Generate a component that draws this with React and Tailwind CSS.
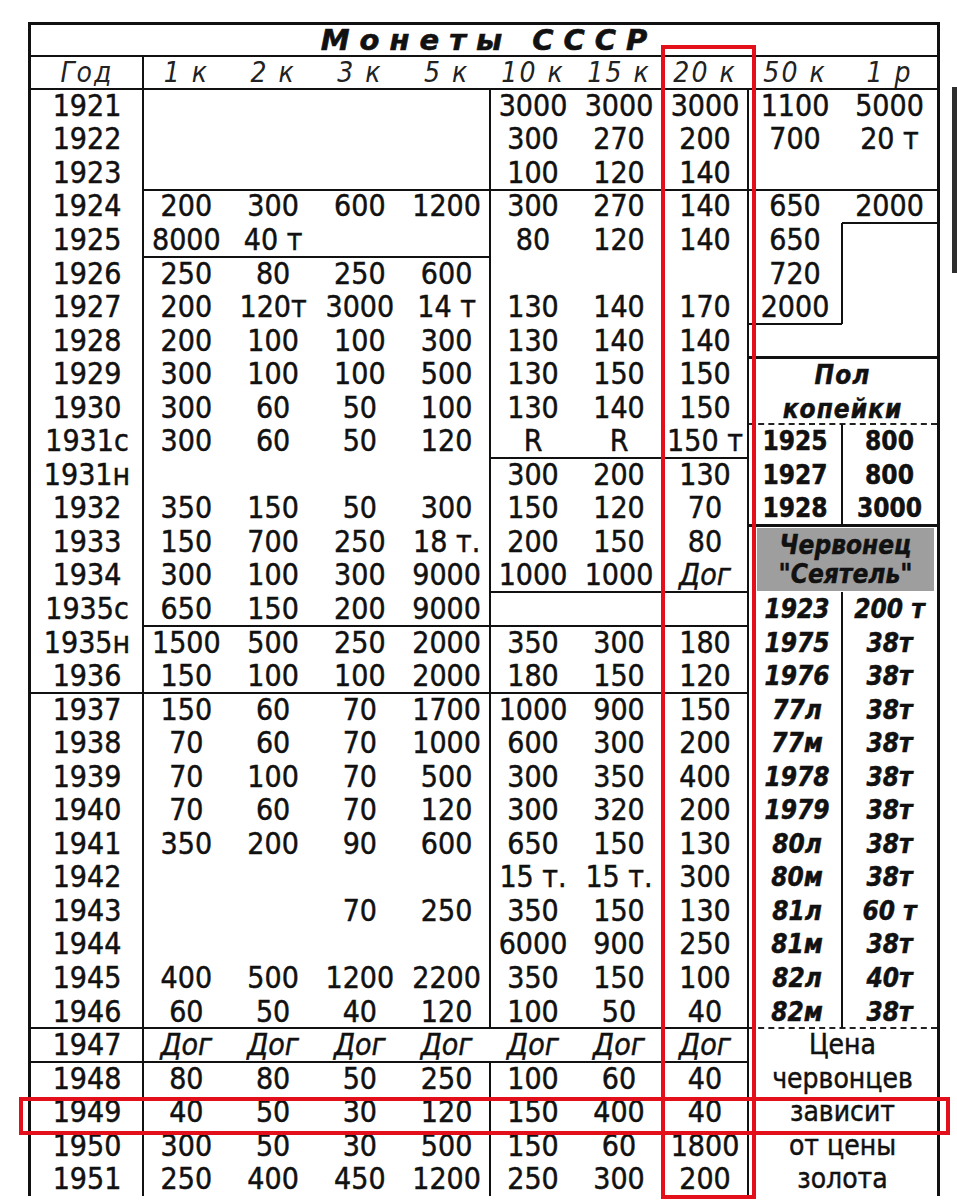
import React, { Fragment } from "react";

const L = [
  ["1921", "", "", "", "", "3000", "3000", "3000"],
  ["1922", "", "", "", "", "300", "270", "200"],
  ["1923", "", "", "", "", "100", "120", "140"],
  ["1924", "200", "300", "600", "1200", "300", "270", "140"],
  ["1925", "8000", "40 т", "", "", "80", "120", "140"],
  ["1926", "250", "80", "250", "600", "", "", ""],
  ["1927", "200", "120т", "3000", "14 т", "130", "140", "170"],
  ["1928", "200", "100", "100", "300", "130", "140", "140"],
  ["1929", "300", "100", "100", "500", "130", "150", "150"],
  ["1930", "300", "60", "50", "100", "130", "140", "150"],
  ["1931с", "300", "60", "50", "120", "R", "R", "150 т"],
  ["1931н", "", "", "", "", "300", "200", "130"],
  ["1932", "350", "150", "50", "300", "150", "120", "70"],
  ["1933", "150", "700", "250", "18 т.", "200", "150", "80"],
  ["1934", "300", "100", "300", "9000", "1000", "1000", "Дог"],
  ["1935с", "650", "150", "200", "9000", "", "", ""],
  ["1935н", "1500", "500", "250", "2000", "350", "300", "180"],
  ["1936", "150", "100", "100", "2000", "180", "150", "120"],
  ["1937", "150", "60", "70", "1700", "1000", "900", "150"],
  ["1938", "70", "60", "70", "1000", "600", "300", "200"],
  ["1939", "70", "100", "70", "500", "300", "350", "400"],
  ["1940", "70", "60", "70", "120", "300", "320", "200"],
  ["1941", "350", "200", "90", "600", "650", "150", "130"],
  ["1942", "", "", "", "", "15 т.", "15 т.", "300"],
  ["1943", "", "", "70", "250", "350", "150", "130"],
  ["1944", "", "", "", "", "6000", "900", "250"],
  ["1945", "400", "500", "1200", "2200", "350", "150", "100"],
  ["1946", "60", "50", "40", "120", "100", "50", "40"],
  ["1947", "Дог", "Дог", "Дог", "Дог", "Дог", "Дог", "Дог"],
  ["1948", "80", "80", "50", "250", "100", "60", "40"],
  ["1949", "40", "50", "30", "120", "150", "400", "40"],
  ["1950", "300", "50", "30", "500", "150", "60", "1800"],
  ["1951", "250", "400", "450", "1200", "250", "300", "200"],
];

const R = [
  { k: "n", a: "1100", b: "5000" },
  { k: "n", a: "700", b: "20 т" },
  { k: "n", a: "", b: "" },
  { k: "n", a: "650", b: "2000" },
  { k: "n", a: "650", b: "" },
  { k: "n", a: "720", b: "" },
  { k: "n", a: "2000", b: "" },
  { k: "n", a: "", b: "" },
  { k: "cap", t: "Пол" },
  { k: "cap", t: "копейки" },
  { k: "b", a: "1925", b: "800" },
  { k: "b", a: "1927", b: "800" },
  { k: "b", a: "1928", b: "3000" },
  { k: "gray" },
  { k: "skip" },
  { k: "bi", a: "1923", b: "200 т" },
  { k: "bi", a: "1975", b: "38т" },
  { k: "bi", a: "1976", b: "38т" },
  { k: "bi", a: "77л", b: "38т" },
  { k: "bi", a: "77м", b: "38т" },
  { k: "bi", a: "1978", b: "38т" },
  { k: "bi", a: "1979", b: "38т" },
  { k: "bi", a: "80л", b: "38т" },
  { k: "bi", a: "80м", b: "38т" },
  { k: "bi", a: "81л", b: "60 т" },
  { k: "bi", a: "81м", b: "38т" },
  { k: "bi", a: "82л", b: "40т" },
  { k: "bi", a: "82м", b: "38т" },
  { k: "txt", t: "Цена" },
  { k: "txt", t: "червонцев" },
  { k: "txt", t: "зависит" },
  { k: "txt", t: "от цены" },
  { k: "txt", t: "золота" },
];

const HEAD = ["Год", "1 к", "2 к", "3 к", "5 к", "10 к", "15 к", "20 к", "50 к", "1 р"];

function Cell({ children, className = "" }) {
  return (
    <div className={"flex items-center justify-center whitespace-nowrap " + className}>
      {children}
    </div>
  );
}

function Right({ r }) {
  if (r.k === "n")
    return (
      <>
        <Cell>{r.a}</Cell>
        <Cell>{r.b}</Cell>
      </>
    );
  if (r.k === "cap")
    return (
      <Cell className="col-span-2 font-['DejaVu_Sans',sans-serif] font-bold italic text-[26px] tracking-[1px] pt-[2px]">
        {r.t}
      </Cell>
    );
  if (r.k === "b")
    return (
      <>
        <Cell className="font-['DejaVu_Sans',sans-serif] font-bold text-[26px]">{r.a}</Cell>
        <Cell className="font-['DejaVu_Sans',sans-serif] font-bold text-[26px]">{r.b}</Cell>
      </>
    );
  if (r.k === "bi")
    return (
      <>
        <Cell className="font-['DejaVu_Sans',sans-serif] font-bold italic text-[26px] pl-[4px]">{r.a}</Cell>
        <Cell className="font-['DejaVu_Sans',sans-serif] font-bold italic text-[26px]">{r.b}</Cell>
      </>
    );
  if (r.k === "gray")
    return (
      <div className="col-span-2 row-span-2 ml-[9px] mr-[3px] mt-[3px] mb-[1px] bg-[#9e9e9e] grid grid-rows-2 font-['DejaVu_Sans',sans-serif] font-bold italic text-[26px] text-[#111]">
        <div className="flex items-center justify-center pt-[2px]">Червонец</div>
        <div className="flex items-center justify-center pb-[2px]">"Сеятель"</div>
      </div>
    );
  if (r.k === "txt")
    return (
      <Cell className="col-span-2 font-['DejaVu_Sans',sans-serif] text-[28px]">{r.t}</Cell>
    );
  return null;
}

const GRID =
  "grid grid-cols-[112px_86.75px_86.75px_86.75px_86.75px_86px_86px_86px_94px_95px] grid-rows-[31px_33px_repeat(33,33.56px)]";

function Lines() {
  const h = "border-t-2 border-[#111] -mt-px";
  const v = "border-l-2 border-[#111] -ml-px";
  return (
    <div className={GRID + " col-start-1 row-start-1 pointer-events-none"}>
      <div className={"row-start-[2] col-start-[1] col-end-[11] " + h} />
      <div className={"row-start-[3] col-start-[1] col-end-[11] " + h} />
      <div className={"row-start-[6] col-start-[2] col-end-[11] " + h} />
      <div className={"row-start-[8] col-start-[2] col-end-[6] " + h} />
      <div className={"row-start-[7] col-start-[10] col-end-[11] " + h} />
      <div className={"row-start-[10] col-start-[9] col-end-[10] " + h} />
      <div className="row-start-[11] col-start-[9] col-end-[11] border-t-[3px] border-[#111] -mt-px" />
      <div className="row-start-[13] col-start-[9] col-end-[11] border-t-2 border-dashed border-[#222] -mt-px" />
      <div className={"row-start-[14] col-start-[6] col-end-[9] " + h} />
      <div className="row-start-[16] col-start-[9] col-end-[11] border-t-[3px] border-[#111] -mt-px" />
      <div className={"row-start-[18] col-start-[6] col-end-[9] " + h} />
      <div className={"row-start-[19] col-start-[2] col-end-[9] " + h} />
      <div className={"row-start-[21] col-start-[1] col-end-[9] " + h} />
      <div className={"row-start-[31] col-start-[1] col-end-[9] " + h} />
      <div className="row-start-[31] col-start-[9] col-end-[11] border-t-2 border-dashed border-[#222] -mt-px" />
      <div className={"row-start-[32] col-start-[1] col-end-[9] " + h} />
      <div className={"col-start-[2] row-start-[2] row-end-[36] " + v} />
      <div className={"col-start-[6] row-start-[3] row-end-[31] " + v} />
      <div className={"col-start-[6] row-start-[32] row-end-[36] " + v} />
      <div className={"col-start-[9] row-start-[3] row-end-[36] " + v} />
      <div className={"col-start-[10] row-start-[7] row-end-[10] " + v} />
      <div className={"col-start-[10] row-start-[13] row-end-[16] " + v} />
      <div className={"col-start-[10] row-start-[18] row-end-[31] " + v} />
    </div>
  );
}

function Texts() {
  return (
    <div
      className={
        GRID +
        " col-start-1 row-start-1 font-['DejaVu_Sans_Condensed','DejaVu_Sans',sans-serif] font-stretch-condensed text-[30px] leading-none text-[#111] [-webkit-text-stroke:0.45px_#111]"
      }
    >
      <div className="col-span-10 flex items-center justify-center pl-[10px] font-['DejaVu_Sans',sans-serif] font-stretch-normal font-bold italic text-[29px] leading-[29px] tracking-[10px] [-webkit-text-stroke:0.6px_#111]">
        Монеты СССР
      </div>
      {HEAD.map((t, i) => (
        <div
          key={i}
          className="flex items-end justify-center pb-[2px] italic text-[28px] leading-[28px] tracking-[2px] text-[#222] [-webkit-text-stroke:0px]"
        >
          {t}
        </div>
      ))}
      {L.map((row, i) => (
        <Fragment key={i}>
          {row.map((val, j) => (
            <Cell key={j} className={val === "Дог" ? "italic" : ""}>
              {val}
            </Cell>
          ))}
          <Right r={R[i]} />
        </Fragment>
      ))}
    </div>
  );
}

export default function App() {
  return (
    <div className="relative w-[957px] h-[1200px] overflow-hidden bg-white">
      <div className="flex pt-[22px] pl-[28px]">
        <div className="grid w-[912px] shrink-0 border-[3px] border-b-0 border-[#111]">
          <Texts />
          <Lines />
        </div>
        <div className="ml-[12px] mt-[65px] w-[5px] h-[186px] shrink-0 bg-[#2e2e2e]" />
      </div>
      <div className="absolute left-[661px] top-[45px] w-[95px] h-[1154px] border-4 border-[#e3101b]" />
      <div className="absolute left-[19px] top-[1097px] w-[931px] h-[38px] border-4 border-[#e3101b]" />
    </div>
  );
}
